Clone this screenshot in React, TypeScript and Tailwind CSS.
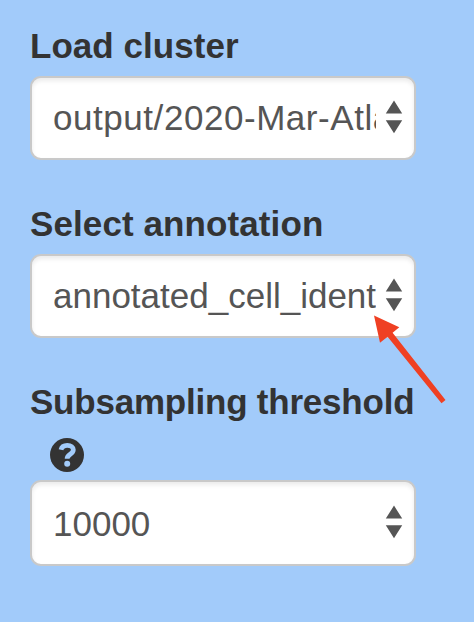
function QuestionIcon() {
  return (
    <svg className="size-[34px]" viewBox="0 0 34 34">
      <circle cx="17" cy="17" r="17" fill="#333" />
      <path
        d="M11 11.800C11.700 8.700 14 7.400 17.300 7.400c3.700 0 6 1.700 6 4.400 0 4.600-6.200 4.400-6.200 9"
        fill="none"
        stroke="#a2cbfa"
        strokeWidth="4.800"
      />
      <circle cx="17.200" cy="25.700" r="3" fill="#a2cbfa" />
    </svg>
  );
}

function SelectBox({ value, size, spacing }: { value: string; size: string; spacing: string }) {
  return (
    <div
      className={`flex w-[386px] items-center rounded-[11px] border-2 border-[#c9c9c9] bg-white pl-[21px] pr-[10px] text-[#555] shadow-[inset_0_3px_4px_rgba(0,0,0,0.08)] ${size}`}
    >
      <span className={`w-[323px] overflow-hidden whitespace-nowrap text-[35px] leading-[50px] ${spacing}`}>{value}</span>
      <svg className="mb-[2px] ml-[9px] h-[34px] w-[18px] shrink-0" viewBox="0 0 18 34" fill="#555">
        <path d="M.8 13.600 9 .6l8.200 13zM.8 20.300h16.400L9 33.300z" />
      </svg>
    </div>
  );
}

function Label({ text, spacing }: { text: string; spacing: string }) {
  return <div className={`whitespace-nowrap text-[35px] font-bold leading-[50px] text-[#333] ${spacing}`}>{text}</div>;
}

export default function App() {
  return (
    <div className="relative h-[622px] w-[474px] overflow-hidden bg-[#a2cbfa] pl-[30px] pt-[21px] font-['Liberation_Sans',Arial,sans-serif]">
      <Label text="Load cluster" spacing="tracking-[0.05px]" />
      <div className="mt-[5px]">
        <SelectBox value="output/2020-Mar-Atlas" size="h-[84px]" spacing="tracking-[0.55px]" />
      </div>
      <div className="mt-[39px]">
        <Label text="Select annotation" spacing="tracking-[0.1px]" />
      </div>
      <div className="mt-[5px]">
        <SelectBox value="annotated_cell_ident" size="h-[84px]" spacing="tracking-normal" />
      </div>
      <div className="mt-[39px]">
        <Label text="Subsampling threshold" spacing="tracking-[-0.22px]" />
        <div className="flex h-[48px] items-start pl-[20px] pt-[11px]">
          <QuestionIcon />
        </div>
      </div>
      <div className="mt-[5px]">
        <SelectBox value="10000" size="h-[86px]" spacing="pt-[2px]" />
      </div>
      <svg className="absolute left-[370px] top-[310px] h-[96px] w-[80px]" viewBox="0 0 80 96">
        <path d="M4 5.500 29.300 17.300 22.600 22.800 75.500 90 71.500 93.200 17.600 26.800 10 32.800z" fill="#ef4023" />
      </svg>
    </div>
  );
}
